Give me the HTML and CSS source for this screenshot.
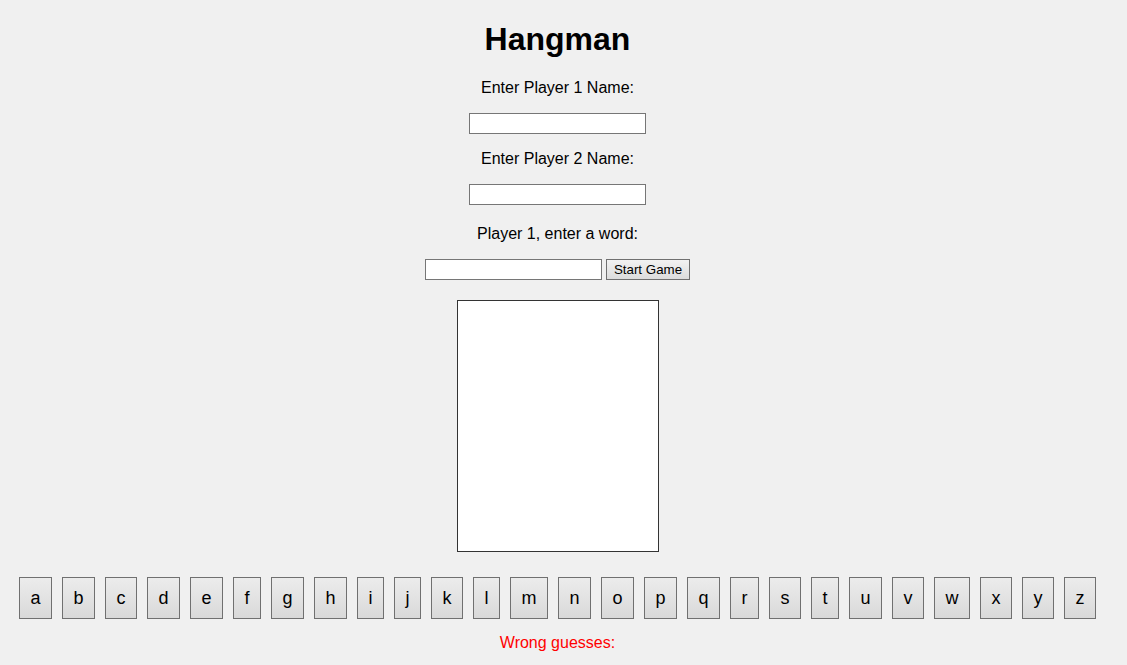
FILE: index.html
```html
<!DOCTYPE html>
<html>
<head>
<meta charset="utf-8">
<title>Hangman</title>
<link rel="stylesheet" href="styles.css">
</head>
<body>
<div class="page">
  <h1 class="title">Hangman</h1>
  <label class="label label-first" for="p1">Enter Player 1 Name:</label>
  <input class="field field-first" id="p1" type="text">
  <label class="label" for="p2">Enter Player 2 Name:</label>
  <input class="field" id="p2" type="text">
  <label class="label label-word" for="word">Player 1, enter a word:</label>
  <div class="word-row">
    <input class="field" id="word" type="text">
    <button class="start-btn" type="button">Start Game</button>
  </div>
  <div class="board"></div>
  <div class="letters">
    <button class="letter" type="button">a</button>
    <button class="letter" type="button">b</button>
    <button class="letter" type="button">c</button>
    <button class="letter" type="button">d</button>
    <button class="letter" type="button">e</button>
    <button class="letter" type="button">f</button>
    <button class="letter" type="button">g</button>
    <button class="letter" type="button">h</button>
    <button class="letter" type="button">i</button>
    <button class="letter" type="button">j</button>
    <button class="letter" type="button">k</button>
    <button class="letter" type="button">l</button>
    <button class="letter" type="button">m</button>
    <button class="letter" type="button">n</button>
    <button class="letter" type="button">o</button>
    <button class="letter" type="button">p</button>
    <button class="letter" type="button">q</button>
    <button class="letter" type="button">r</button>
    <button class="letter" type="button">s</button>
    <button class="letter" type="button">t</button>
    <button class="letter" type="button">u</button>
    <button class="letter" type="button">v</button>
    <button class="letter" type="button">w</button>
    <button class="letter" type="button">x</button>
    <button class="letter" type="button">y</button>
    <button class="letter" type="button">z</button>
  </div>
  <p class="wrong">Wrong guesses:</p>
</div>
</body>
</html>
```

FILE: styles.css
```css
html, body {
  margin: 0;
  padding: 0;
  background: #f0f0f0;
}

body {
  font-family: "Liberation Sans", Arial, sans-serif;
  font-size: 16px;
  color: #000;
}

.page {
  display: flex;
  flex-direction: column;
  align-items: center;
  padding: 0 20px 0 8px;
}

.title {
  margin: 21px 0 0;
  font-size: 32px;
  font-weight: bold;
  line-height: 37px;
}

.label {
  display: block;
  margin-top: 16px;
  line-height: 18px;
  font-size: 16px;
}

.label-first {
  margin-top: 21px;
}

.label-word {
  margin-top: 20px;
}

.field {
  box-sizing: border-box;
  width: 177px;
  height: 21px;
  margin: 16px 0 0;
  padding: 1px 2px;
  border: 1px solid #767676;
  background: #fff;
  font-family: "Liberation Sans", Arial, sans-serif;
  font-size: 13.33px;
}

.field-first {
  margin-top: 16px;
}

.word-row {
  display: flex;
  align-items: flex-start;
  gap: 4px;
  margin-top: 16px;
}

.word-row .field {
  margin: 0;
}

.start-btn {
  box-sizing: border-box;
  height: 21px;
  margin: 0;
  padding: 1px 7px;
  border: 1px solid #707070;
  background: linear-gradient(#f2f2f2, #dcdcdc);
  font-family: "Liberation Sans", Arial, sans-serif;
  font-size: 13.33px;
  color: #000;
  line-height: 17px;
}

.board {
  box-sizing: border-box;
  width: 202px;
  height: 252px;
  margin-top: 20px;
  border: 1px solid #333;
  background: #fff;
}

.letters {
  display: flex;
  flex-wrap: wrap;
  justify-content: center;
  gap: 10px;
  margin-top: 25px;
}

.letter {
  box-sizing: border-box;
  height: 42px;
  margin: 0;
  padding: 10px 10.5px;
  border: 1px solid #707070;
  background: linear-gradient(#ececec, #d9d9d9);
  font-family: "Liberation Sans", Arial, sans-serif;
  font-size: 18px;
  line-height: 20px;
  color: #000;
}

.wrong {
  margin: 15px 0 0;
  line-height: 18px;
  color: #ff0000;
}
```
